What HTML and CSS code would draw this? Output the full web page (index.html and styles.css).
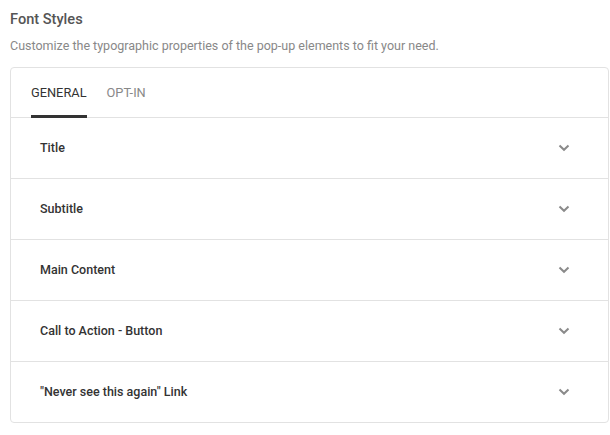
FILE: index.html
```html
<!DOCTYPE html>
<html>
<head>
<meta charset="utf-8">
<link rel="stylesheet" href="styles.css">
</head>
<body>
<div class="page">
  <h2 class="heading">Font Styles</h2>
  <p class="desc">Customize the typographic properties of the pop-up elements to fit your need.</p>
  <div class="card">
    <div class="tabs">
      <div class="tab active">GENERAL</div>
      <div class="tab">OPT-IN</div>
    </div>
    <div class="row"><span>Title</span><svg class="chev" width="12" height="8" viewBox="0 0 12 8"><path d="M1.5 1.5 L6 5.8 L10.5 1.5" fill="none" stroke="#8a8a8a" stroke-width="2"/></svg></div>
    <div class="row"><span>Subtitle</span><svg class="chev" width="12" height="8" viewBox="0 0 12 8"><path d="M1.5 1.5 L6 5.8 L10.5 1.5" fill="none" stroke="#8a8a8a" stroke-width="2"/></svg></div>
    <div class="row"><span>Main Content</span><svg class="chev" width="12" height="8" viewBox="0 0 12 8"><path d="M1.5 1.5 L6 5.8 L10.5 1.5" fill="none" stroke="#8a8a8a" stroke-width="2"/></svg></div>
    <div class="row"><span>Call to Action - Button</span><svg class="chev" width="12" height="8" viewBox="0 0 12 8"><path d="M1.5 1.5 L6 5.8 L10.5 1.5" fill="none" stroke="#8a8a8a" stroke-width="2"/></svg></div>
    <div class="row"><span>"Never see this again" Link</span><svg class="chev" width="12" height="8" viewBox="0 0 12 8"><path d="M1.5 1.5 L6 5.8 L10.5 1.5" fill="none" stroke="#8a8a8a" stroke-width="2"/></svg></div>
  </div>
</div>
</body>
</html>
```

FILE: styles.css
```css
* { box-sizing: border-box; }
html, body { margin: 0; padding: 0; background: #fff; }
body { font-family: Roboto, "Liberation Sans", sans-serif; }
.page { padding: 9px 1px 0 10px; }
.heading {
  margin: 0;
  font-size: 14.6px;
  font-weight: 500;
  color: #555;
  line-height: 20px;
}
.desc {
  margin: 7px 0 0;
  font-size: 12.5px;
  color: #888;
  line-height: 20px;
}
.card {
  margin-top: 11px;
  border: 1px solid #e2e2e2;
  border-radius: 4px;
}
.tabs {
  display: flex;
  gap: 20px;
  padding: 0 20px;
  border-bottom: 1px solid #e2e2e2;
  height: 50px;
}
.tab {
  font-size: 12.8px;
  color: #888;
  display: flex;
  align-items: center;
  height: 50px;
  padding-top: 1px;
  margin-bottom: -1px;
  border-bottom: 3px solid transparent;
}
.tab.active {
  color: #333;
  border-bottom-color: #333;
}
.row {
  display: flex;
  align-items: center;
  justify-content: space-between;
  height: 61px;
  padding: 0 38px 2px 29px;
  border-bottom: 1px solid #e2e2e2;
  font-size: 12.5px;
  font-weight: 500;
  color: #333;
}
.row:last-child { border-bottom: none; height: 60px; }
.chev { display: block; margin-top: 1px; }
```
